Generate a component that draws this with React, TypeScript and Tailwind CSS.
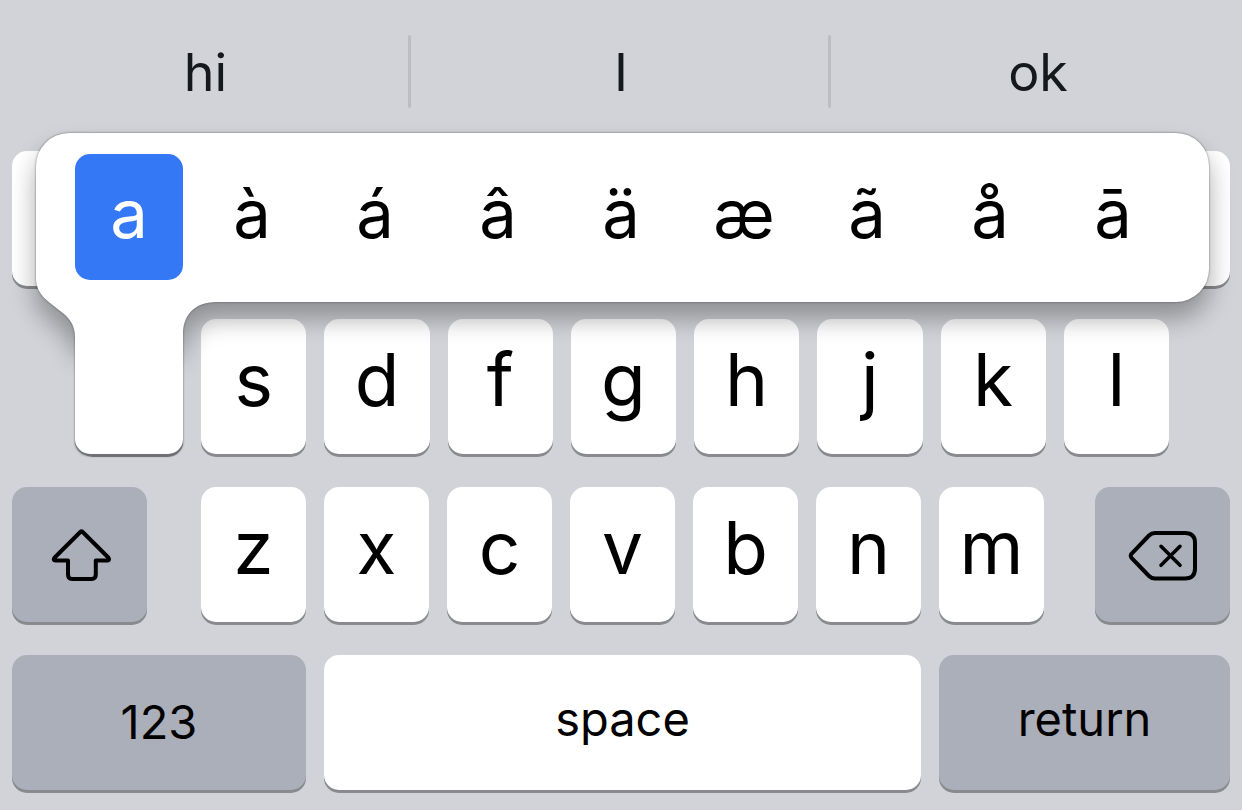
import type { ReactNode } from "react";

const topRow = ["q", "w", "e", "r", "t", "y", "u", "i", "o", "p"];
const homeRow = ["s", "d", "f", "g", "h", "j", "k", "l"];
const bottomRow = ["z", "x", "c", "v", "b", "n", "m"];
const variants = ["a", "à", "á", "â", "ä", "æ", "ã", "å", "ā"];

function Key({ className, label, children }: { className: string; label?: string; children?: ReactNode }) {
  return (
    <button
      type="button"
      aria-label={label}
      className={`flex h-[135px] items-center justify-center rounded-[15px] shadow-[0_3px_0_#898a8d] ${className}`}
    >
      {children}
    </button>
  );
}

function Letter({ children }: { children: string }) {
  return <Key className="min-w-0 flex-1 bg-white pb-[15px] text-[73px] leading-none font-[370]">{children}</Key>;
}

function Suggestion({ children }: { children: string }) {
  return (
    <button type="button" className="flex h-[73px] items-center justify-center pt-[3px] pl-[3px] text-[52px] leading-none font-[380] text-[#16191b]">
      {children}
    </button>
  );
}

function Divider() {
  return <div className="rounded-full bg-[#bcbdc2]" />;
}

function ShiftIcon() {
  return (
    <svg width="60" height="54" viewBox="0 0 60 54" fill="none" stroke="black" strokeWidth="4" strokeLinejoin="round" aria-hidden="true">
      <path d="M29.3 3 Q30.500 1.800 31.7 3 L57.300 28.500 Q59 31.500 56.500 31.500 H44.800 V45.500 Q44.800 50 40.500 50 H21 Q17 50 17 45.500 V31.500 H4.500 Q1.500 31.500 3.700 28.500 Z" />
    </svg>
  );
}

function BackspaceIcon() {
  return (
    <svg width="70" height="52" viewBox="0 0 70 52" fill="none" stroke="black" strokeWidth="4" strokeLinecap="round" strokeLinejoin="round" aria-hidden="true">
      <path d="M27 3 H57 Q67 3 67 13 V38.500 Q67 48.500 57 48.500 H27 Q23.500 48.500 21 46 L3.500 27.800 Q2 25.800 3.500 23.800 L21 5.500 Q23.500 3 27 3 Z" />
      <path d="M33 16.300 L52 35.300 M52 16.300 L33 35.300" strokeWidth="3.6" />
    </svg>
  );
}

function VariantPopup() {
  return (
    <div className="absolute -top-[18px] right-[33px] left-9 drop-shadow-[0_0_1px_rgba(0,0,0,0.5)]">
      <div className="relative drop-shadow-[0_16px_13px_rgba(0,0,0,0.23)]">
        <svg className="absolute top-[137px] left-0" width="180" height="70" viewBox="0 0 180 70" fill="white" aria-hidden="true">
          <path d="M0 0 V8 C0 18 4 25 14 33 L28 44 C35 50 39 57 39 67 V70 H147 V64 C147 46 158 32 180 32 V0 Z" />
        </svg>
        <div role="listbox" aria-label="Accents for a" className="relative flex h-[169px] gap-[15px] rounded-[33px] bg-white pt-[21px] pr-[42px] pl-[39px]">
          {variants.map((v, i) => (
            <button
              key={v}
              type="button"
              role="option"
              aria-selected={i === 0}
              className={`flex h-[126px] min-w-0 flex-1 items-center justify-center rounded-[15px] pb-2 text-[67px] leading-none font-[370] ${
                i === 0 ? "bg-[#3478f6] text-white" : "text-black"
              }`}
            >
              {v}
            </button>
          ))}
        </div>
      </div>
      <div className="relative ml-[39px] h-[152px] w-[108px] rounded-b-[15px] bg-white shadow-[0_2px_0_#707174]" />
    </div>
  );
}

export default function App() {
  return (
    <main className="min-h-screen bg-[#d2d3d8] pb-5 font-['Inter','Liberation_Sans',sans-serif] text-black">
      <div className="grid grid-cols-[408fr_3px_417fr_3px_411fr] pt-[35px] pb-[43px]">
        <Suggestion>hi</Suggestion>
        <Divider />
        <Suggestion>I</Suggestion>
        <Divider />
        <Suggestion>ok</Suggestion>
      </div>

      <div className="relative flex flex-col gap-[33px] px-3">
        <div className="flex gap-[18px]">
          {topRow.map((k) => (
            <Key key={k} label={k} className="min-w-0 flex-1 bg-white" />
          ))}
        </div>
        <div className="flex gap-[18px] pr-[61px] pl-[66px]">
          <Key label="a" className="min-w-0 flex-1 bg-white" />
          {homeRow.map((k) => (
            <Letter key={k}>{k}</Letter>
          ))}
        </div>
        <div className="flex">
          <Key label="Shift" className="w-[135px] bg-[#abafba] pt-[3px] pl-[3px]">
            <ShiftIcon />
          </Key>
          <div className="mr-[51px] ml-[54px] flex flex-1 gap-[18px]">
            {bottomRow.map((k) => (
              <Letter key={k}>{k}</Letter>
            ))}
          </div>
          <Key label="Delete" className="w-[135px] bg-[#abafba] pt-[3px]">
            <BackspaceIcon />
          </Key>
        </div>
        <div className="flex gap-[18px] text-[47px] leading-none font-[380]">
          <Key className="w-[294px] bg-[#abafba] pb-0.5">123</Key>
          <Key className="flex-1 bg-white pb-2">space</Key>
          <Key className="w-[291px] bg-[#abafba] pb-2">return</Key>
        </div>
        <VariantPopup />
      </div>
    </main>
  );
}
